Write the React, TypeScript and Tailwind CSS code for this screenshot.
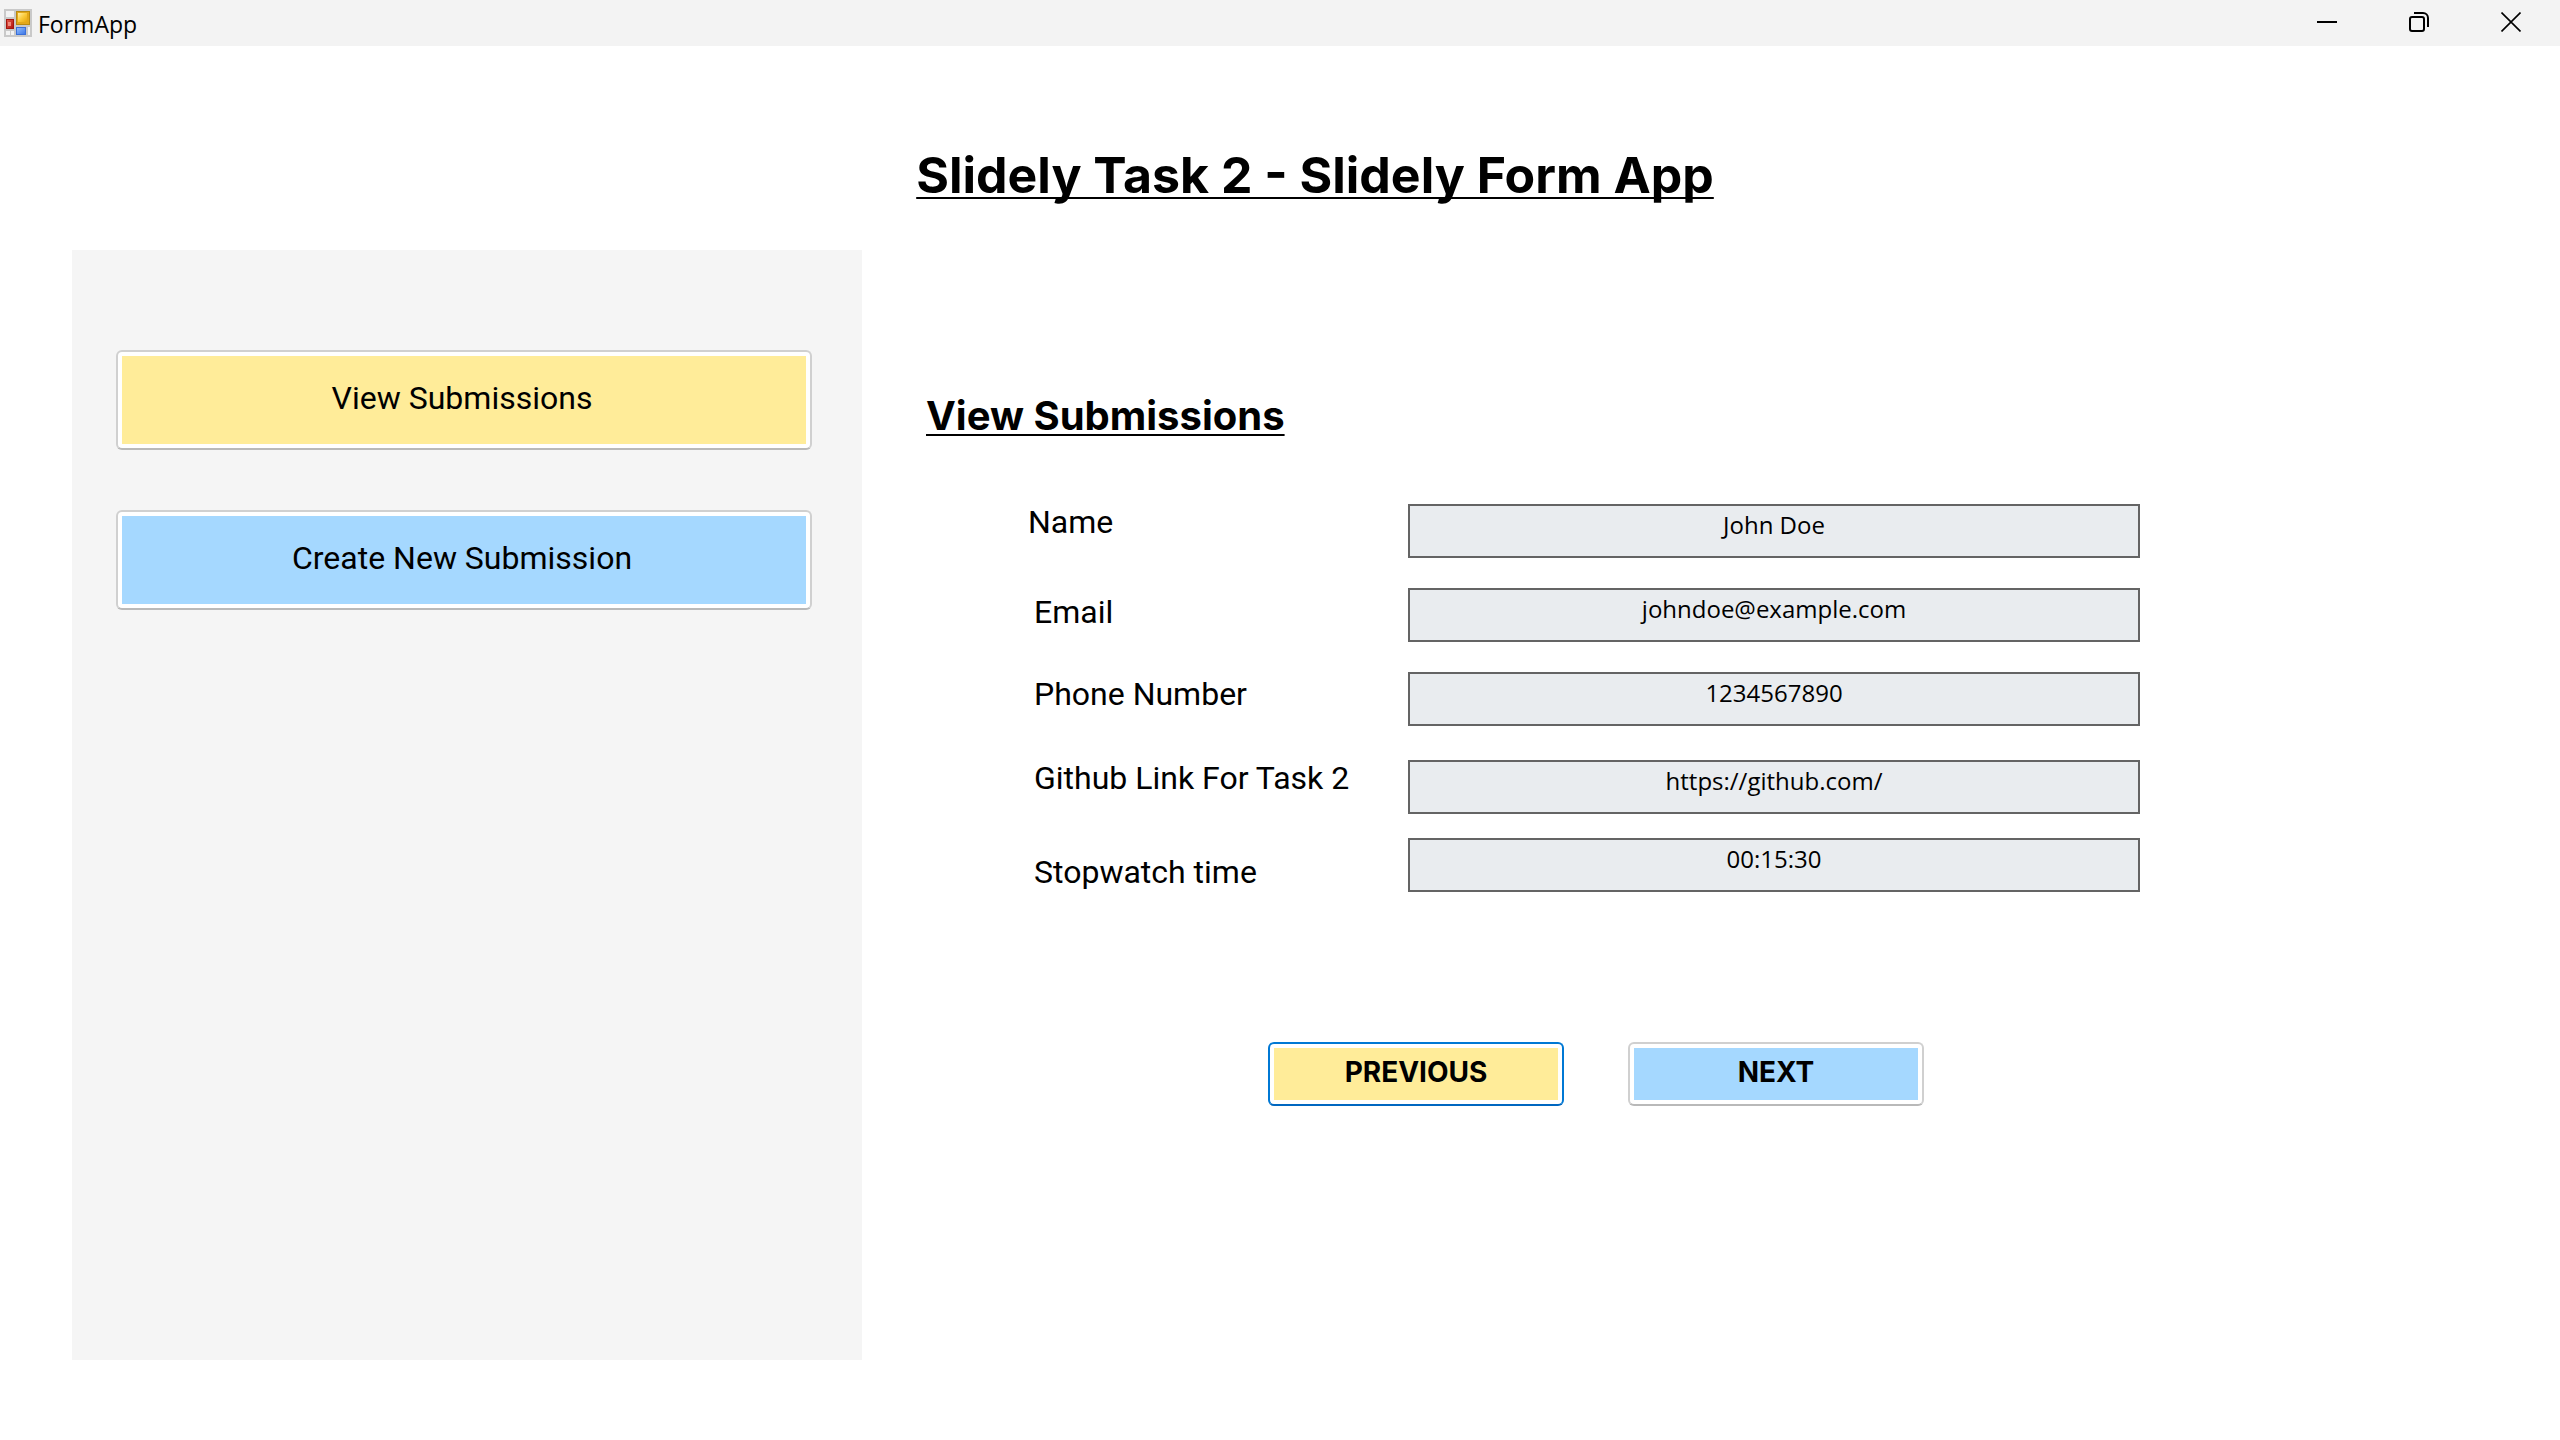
import React from "react";

const fields = [
  { id: "name", label: "Name", value: "John Doe", type: "text", row: "", labelBox: "" },
  { id: "email", label: "Email", value: "johndoe@example.com", type: "email", row: "mt-[30px]", labelBox: "pl-1.5 pt-1.5" },
  { id: "phone", label: "Phone Number", value: "1234567890", type: "tel", row: "mt-[30px]", labelBox: "pl-1.5 pt-1" },
  { id: "github", label: "Github Link For Task 2", value: "https://github.com/", type: "url", row: "mt-[34px]", labelBox: "pl-1.5" },
  { id: "stopwatch", label: "Stopwatch time", value: "00:15:30", type: "text", row: "mt-6", labelBox: "pl-1.5 pt-4" },
];

function AppIcon() {
  return (
    <svg width="28" height="28" viewBox="0 0 28 28" aria-hidden="true">
      <defs>
        <linearGradient id="gold" x1="0" y1="0" x2="1" y2="1">
          <stop offset="0" stopColor="#fff0a8" />
          <stop offset="0.5" stopColor="#fbcb3c" />
          <stop offset="1" stopColor="#e5a50c" />
        </linearGradient>
        <linearGradient id="red" x1="0" y1="0" x2="1" y2="1">
          <stop offset="0" stopColor="#e2574a" />
          <stop offset="1" stopColor="#b3160f" />
        </linearGradient>
        <linearGradient id="blue" x1="0" y1="0" x2="1" y2="1">
          <stop offset="0" stopColor="#8fbcff" />
          <stop offset="1" stopColor="#3f78e6" />
        </linearGradient>
      </defs>
      <rect width="28" height="28" fill="#c9c9c9" />
      <rect x="2" y="2" width="8" height="6" fill="#f3f3f3" />
      <rect x="2" y="22" width="4" height="4" fill="#f3f3f3" />
      <rect x="7" y="22" width="3" height="4" fill="#f3f3f3" />
      <rect x="24" y="18" width="2" height="8" fill="#f3f3f3" />
      <rect x="12" y="2" width="14" height="14" fill="#b98a10" />
      <rect x="13" y="3" width="12" height="12" fill="#e3a81a" />
      <rect x="14" y="4" width="9" height="9" fill="url(#gold)" />
      <rect x="2" y="10" width="8" height="10" fill="#a3160f" />
      <rect x="3" y="11" width="6" height="8" fill="url(#red)" />
      <rect x="4" y="13" width="3" height="4" fill="#f08a7c" />
      <rect x="12" y="18" width="10" height="8" fill="#3a6fd8" />
      <rect x="13" y="19" width="8" height="6" fill="url(#blue)" />
    </svg>
  );
}

function TitleBar() {
  return (
    <header className="flex h-[46px] items-center bg-[#f3f3f3] pr-[3px] pl-1">
      <AppIcon />
      <span className="ml-1.5 pt-0.5 text-[23px] leading-7 font-['Open_Sans',sans-serif]">FormApp</span>
      <div className="ml-auto flex h-full pb-0.5">
        <button type="button" aria-label="Minimize" className="flex w-[92px] items-center justify-center">
          <svg width="20" height="20" viewBox="0 0 20 20"><path d="M0 10h20" stroke="#000" strokeWidth="2" /></svg>
        </button>
        <button type="button" aria-label="Restore" className="flex w-[92px] items-center justify-center">
          <svg width="20" height="20" viewBox="0 0 20 20" fill="none" stroke="#000" strokeWidth="2">
            <rect x="1" y="5" width="14" height="14" rx="2" />
            <path d="M5 1h9a5 5 0 0 1 5 5v9" />
          </svg>
        </button>
        <button type="button" aria-label="Close" className="flex w-[92px] items-center justify-center">
          <svg width="20" height="20" viewBox="0 0 20 20"><path d="M0.5 0.5l19 19M19.5 0.5l-19 19" stroke="#000" strokeWidth="1.6" /></svg>
        </button>
      </div>
    </header>
  );
}

function FormButton({ children, className }: { children: React.ReactNode; className: string }) {
  return (
    <button type="button" className={`rounded-md border-2 bg-white p-1 ${className}`}>
      {children}
    </button>
  );
}

export default function App() {
  return (
    <div className="flex min-h-screen flex-col bg-white text-black font-[Roboto,sans-serif]">
      <TitleBar />
      <h1 className="mt-[100px] pl-[70px] text-center text-[50px] leading-[58px] font-bold underline decoration-2 underline-offset-4 [text-decoration-skip-ink:none] font-[Inter,sans-serif]">
        Slidely Task 2 - Slidely Form App
      </h1>
      <div className="mt-[46px] grid flex-1 grid-cols-[790fr_1214fr] gap-16 pr-[420px] pb-20 pl-[72px]">
        <nav className="flex flex-col gap-[60px] bg-[#f5f5f5] pt-[100px] pr-[50px] pl-11">
          <FormButton className="h-[100px] border-[#d0d0d0] border-b-[#b9b9b9] text-[32px] leading-10">
            <span className="flex h-full items-center justify-center bg-[#ffec99] pr-1 pb-1">View Submissions</span>
          </FormButton>
          <FormButton className="h-[100px] border-[#d0d0d0] border-b-[#b9b9b9] text-[32px] leading-10">
            <span className="flex h-full items-center justify-center bg-[#a5d8ff] pr-1 pb-1">Create New Submission</span>
          </FormButton>
        </nav>
        <main className="pt-[142px]">
          <h2 className="text-[40px] leading-[48px] font-bold underline decoration-2 underline-offset-4 [text-decoration-skip-ink:none] font-[Inter,sans-serif]">
            View Submissions
          </h2>
          <form className="mt-16 pl-[102px]">
            {fields.map((f) => (
              <div key={f.id} className={`grid grid-cols-[380fr_732fr] items-start ${f.row}`}>
                <label htmlFor={f.id} className={`text-[32px] leading-9 whitespace-nowrap ${f.labelBox}`}>
                  {f.label}
                </label>
                <input
                  id={f.id}
                  type={f.type}
                  readOnly
                  defaultValue={f.value}
                  className="h-[54px] w-full border-2 border-[#646464] bg-[#e9ecef] pb-3.5 text-center text-[24px] leading-8 outline-none font-['Open_Sans',sans-serif]"
                />
              </div>
            ))}
            <div className="mt-[150px] flex justify-center gap-16 pl-6">
              <FormButton className="h-16 w-[296px] border-[#0078d4] border-b-[#0067c0] text-[28px] leading-8 font-bold font-[Inter,sans-serif]">
                <span className="flex h-full items-center justify-center bg-[#ffec99] pb-1">PREVIOUS</span>
              </FormButton>
              <FormButton className="h-16 w-[296px] border-[#d0d0d0] border-b-[#b9b9b9] text-[28px] leading-8 font-bold font-[Inter,sans-serif]">
                <span className="flex h-full items-center justify-center bg-[#a5d8ff] pb-1">NEXT</span>
              </FormButton>
            </div>
          </form>
        </main>
      </div>
    </div>
  );
}
